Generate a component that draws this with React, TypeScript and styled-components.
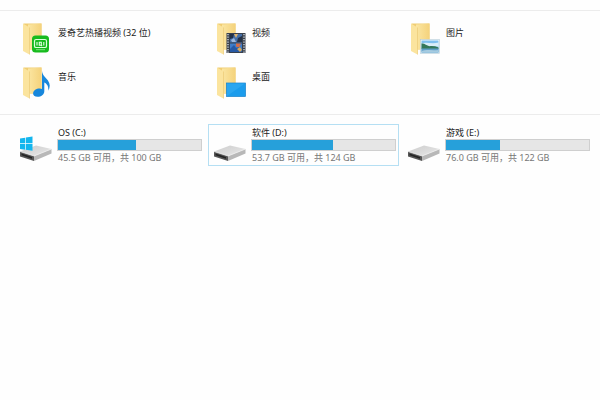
import React, { useId, useState } from "react";
import styled, { createGlobalStyle } from "styled-components";

const GlobalStyle = createGlobalStyle`
  * { box-sizing: border-box; }
  body {
    margin: 0;
    background: #fefefe;
    font-family: "Noto Sans", "Noto Sans CJK SC", sans-serif;
    font-size: 9px;
    line-height: 12px;
    color: #222;
  }
`;

const Explorer = styled.main`
  padding-top: 10px;
`;

const Section = styled.section<{ $gapTop: number; $gapBottom: number }>`
  border-top: 1px solid #ececec;
  padding: ${(p) => p.$gapTop}px 7px ${(p) => p.$gapBottom}px 14px;
`;

const Grid = styled.ul`
  display: grid;
  grid-template-columns: repeat(3, minmax(0, 1fr));
  gap: 2px 3px;
  margin: 0;
  padding: 0;
  list-style: none;
`;

const Tile = styled.button<{ $selected: boolean }>`
  display: flex;
  align-items: flex-start;
  width: 100%;
  height: 42px;
  padding: 0 2px 0 4px;
  border: 1px solid ${(p) => (p.$selected ? "#b5dff3" : "transparent")};
  background: transparent;
  font: inherit;
  color: inherit;
  text-align: left;
  cursor: default;
  outline: none;
`;

const Icon = styled.svg`
  flex: none;
  width: 36px;
  height: 38px;
  margin-right: 2px;
`;

const Details = styled.span<{ $top: number }>`
  display: flex;
  flex: 1;
  flex-direction: column;
  min-width: 0;
  padding-top: ${(p) => p.$top}px;
  white-space: nowrap;
`;

const Name = styled.span`
  padding-left: 1px;
`;

const Capacity = styled.progress`
  appearance: none;
  display: block;
  width: 100%;
  height: 12px;
  margin-bottom: 1px;
  border: 1px solid #cfcfcf;
  background: #e6e6e6;
  &::-webkit-progress-bar { background: #e6e6e6; }
  &::-webkit-progress-value { background: #26a0da; }
`;

const FreeSpace = styled.span`
  padding-left: 1px;
  color: #777;
`;

type Overlay = "iqiyi" | "video" | "picture" | "music" | "desktop";

function OverlayArt({ kind }: { kind: Overlay }) {
  switch (kind) {
    case "iqiyi":
      return (
        <g>
          <rect x="13" y="13.500" width="17" height="17" rx="3.500" fill="#17bb1e" />
          <rect x="15.500" y="17.500" width="12" height="8" rx="1.600" fill="none" stroke="#dcffdc" strokeWidth="1.200" />
          <path d="M18 20v3.500M20.300 20.200h2v3h-2zM22.300 23.200l.8.8M24.800 20v3.500" fill="none" stroke="#e8ffe8" strokeWidth="1.100" />
          <path d="M17 27.700h9" stroke="#9be89b" strokeWidth="0.800" />
        </g>
      );
    case "video":
      return (
        <g transform="translate(1 -1)">
          <rect x="12.500" y="12" width="19" height="20" fill="#39414d" />
          <path d="M14 13v19M30 13v19" stroke="#c5cbd2" strokeWidth="1.500" strokeDasharray="1.200 1.300" />
          <rect x="16" y="13" width="12" height="8.500" fill="#456fa8" />
          <rect x="16" y="22.500" width="12" height="8.500" fill="#3f7cc8" />
          <path d="M16 13h4l-1 4-3 1zM24 17l4-2v6h-5z" fill="#243247" />
          <path d="M20 13h4l-2 4z" fill="#ddb36c" />
          <path d="M17 19l3-2 2 4h-4z" fill="#9bb8dd" />
          <path d="M22 22.500h5l-2 4-3-1z" fill="#d56c45" />
          <path d="M16 28l4-4 2 3 4-1 2 5H16z" fill="#2759a4" />
          <path d="M23 28l3-2 2 3-2 2z" fill="#d7aa5b" />
        </g>
      );
    case "picture":
      return (
        <g transform="translate(1 0)">
          <rect x="12.500" y="17.500" width="19" height="14" fill="#f7fbfd" stroke="#b5cbd8" strokeWidth="0.600" />
          <rect x="13.500" y="18.500" width="17" height="12" fill="#7fc0ef" />
          <path d="M13.500 21.500c5-2 10 1 17-1v4h-17z" fill="#d9edf8" />
          <path d="M13.500 21.500c3-.5 5 2 8 2.700 3-.4 6 0 9 1.300v1.500h-17z" fill="#34785a" />
          <path d="M13.500 26.500h17v4h-17z" fill="#5f9fc8" />
          <path d="M13.500 29c5-2 9 0 17-1v2.500h-17z" fill="#a6cbe0" />
        </g>
      );
    case "music":
      return (
        <path
          transform="translate(2 2)"
          d="M21 3c.6 4.800 3.600 6.400 5.800 9.200 2.600 3.500 2.400 7 .4 10.600.6-4.200-1-6.700-3.900-8.200v8.600c0 3.200-3.200 5.600-6.700 5.600-3 0-4.800-1.500-4.500-3.700.3-2.700 3.400-4.700 6.700-4.600.7 0 1.500.2 2.200.5z"
          fill="#1787dc"
        />
      );
    case "desktop":
      return (
        <g>
          <rect x="13.500" y="17" width="19" height="13.500" fill="#1b9cec" stroke="#1580cb" strokeWidth="0.700" />
          <path d="M14 30V17.500h18z" fill="#2aa6f0" />
        </g>
      );
  }
}

function FolderIcon({ overlay }: { overlay: Overlay }) {
  const id = useId();
  return (
    <Icon viewBox="0 0 36 38" aria-hidden="true">
      <defs>
        <linearGradient id={id} x1="0" x2="1">
          <stop offset="0" stopColor="#fbe6a2" />
          <stop offset="1" stopColor="#f4d27b" />
        </linearGradient>
      </defs>
      <path d="M4.500 1.500h18v26H11z" fill="#f0cd73" />
      <path d="M9 2.500L22.500 1.500v26H9z" fill={`url(#${id})`} />
      <path d="M4 1.500l6.500 4v27L4 29z" fill="#fbe49e" />
      <path d="M10.500 5.500v27" stroke="#ebca75" strokeWidth="0.700" />
      <OverlayArt kind={overlay} />
    </Icon>
  );
}

function DriveIcon({ system }: { system: boolean }) {
  const id = useId();
  return (
    <Icon viewBox="0 0 36 38" aria-hidden="true">
      <defs>
        <linearGradient id={id} x1="0" y1="0" x2="1" y2="1">
          <stop offset="0" stopColor="#cccccc" />
          <stop offset="1" stopColor="#e9e9e9" />
        </linearGradient>
      </defs>
      <path d="M1 26.500L17 20.500l15.500 3.500-17.500 7z" fill={`url(#${id})`} />
      <path d="M15 31l17.500-7v4.500L15 36z" fill="#b8b8b8" />
      <path d="M1 26.500l14 4.500v5L1 31.500z" fill="#555555" />
      <path d="M2.500 28.500l10.500 3.500v1.700L2.500 30.200z" fill="#242424" />
      <path d="M1 26.500l14 4.500 17.500-7" fill="none" stroke="#f3f3f3" strokeWidth="0.700" />
      {system && (
        <path
          d="M1 13.500l5.200-.8v5.600H1zM6.900 12.600l6.600-1v6.700H6.900zM1 19h5.200v5.700l-5.200-.7zM6.900 19h6.600v6.700l-6.600-1z"
          fill="#14b6ee"
        />
      )}
    </Icon>
  );
}

const folders: { name: string; overlay: Overlay }[] = [
  { name: "爱奇艺热播视频 (32 位)", overlay: "iqiyi" },
  { name: "视频", overlay: "video" },
  { name: "图片", overlay: "picture" },
  { name: "音乐", overlay: "music" },
  { name: "桌面", overlay: "desktop" },
];

const drives = [
  { name: "OS (C:)", free: "45.5", total: 100, used: 54.5, system: true },
  { name: "软件 (D:)", free: "53.7", total: 124, used: 70.3, system: false },
  { name: "游戏 (E:)", free: "76.0", total: 122, used: 46, system: false },
];

export default function App() {
  const [selected, setSelected] = useState("软件 (D:)");
  return (
    <>
      <GlobalStyle />
      <Explorer>
        <Section aria-label="文件夹" $gapTop={10} $gapBottom={7}>
          <Grid>
            {folders.map((f) => (
              <li key={f.name}>
                <Tile type="button" $selected={selected === f.name} onClick={() => setSelected(f.name)}>
                  <FolderIcon overlay={f.overlay} />
                  <Details $top={5}>
                    <Name>{f.name}</Name>
                  </Details>
                </Tile>
              </li>
            ))}
          </Grid>
        </Section>
        <Section aria-label="设备和驱动器" $gapTop={9} $gapBottom={9}>
          <Grid>
            {drives.map((d) => (
              <li key={d.name}>
                <Tile type="button" $selected={selected === d.name} onClick={() => setSelected(d.name)}>
                  <DriveIcon system={d.system} />
                  <Details $top={2}>
                    <Name>{d.name}</Name>
                    <Capacity value={d.used} max={d.total} aria-label={d.name} />
                    <FreeSpace>{`${d.free} GB 可用，共 ${d.total} GB`}</FreeSpace>
                  </Details>
                </Tile>
              </li>
            ))}
          </Grid>
        </Section>
      </Explorer>
    </>
  );
}
